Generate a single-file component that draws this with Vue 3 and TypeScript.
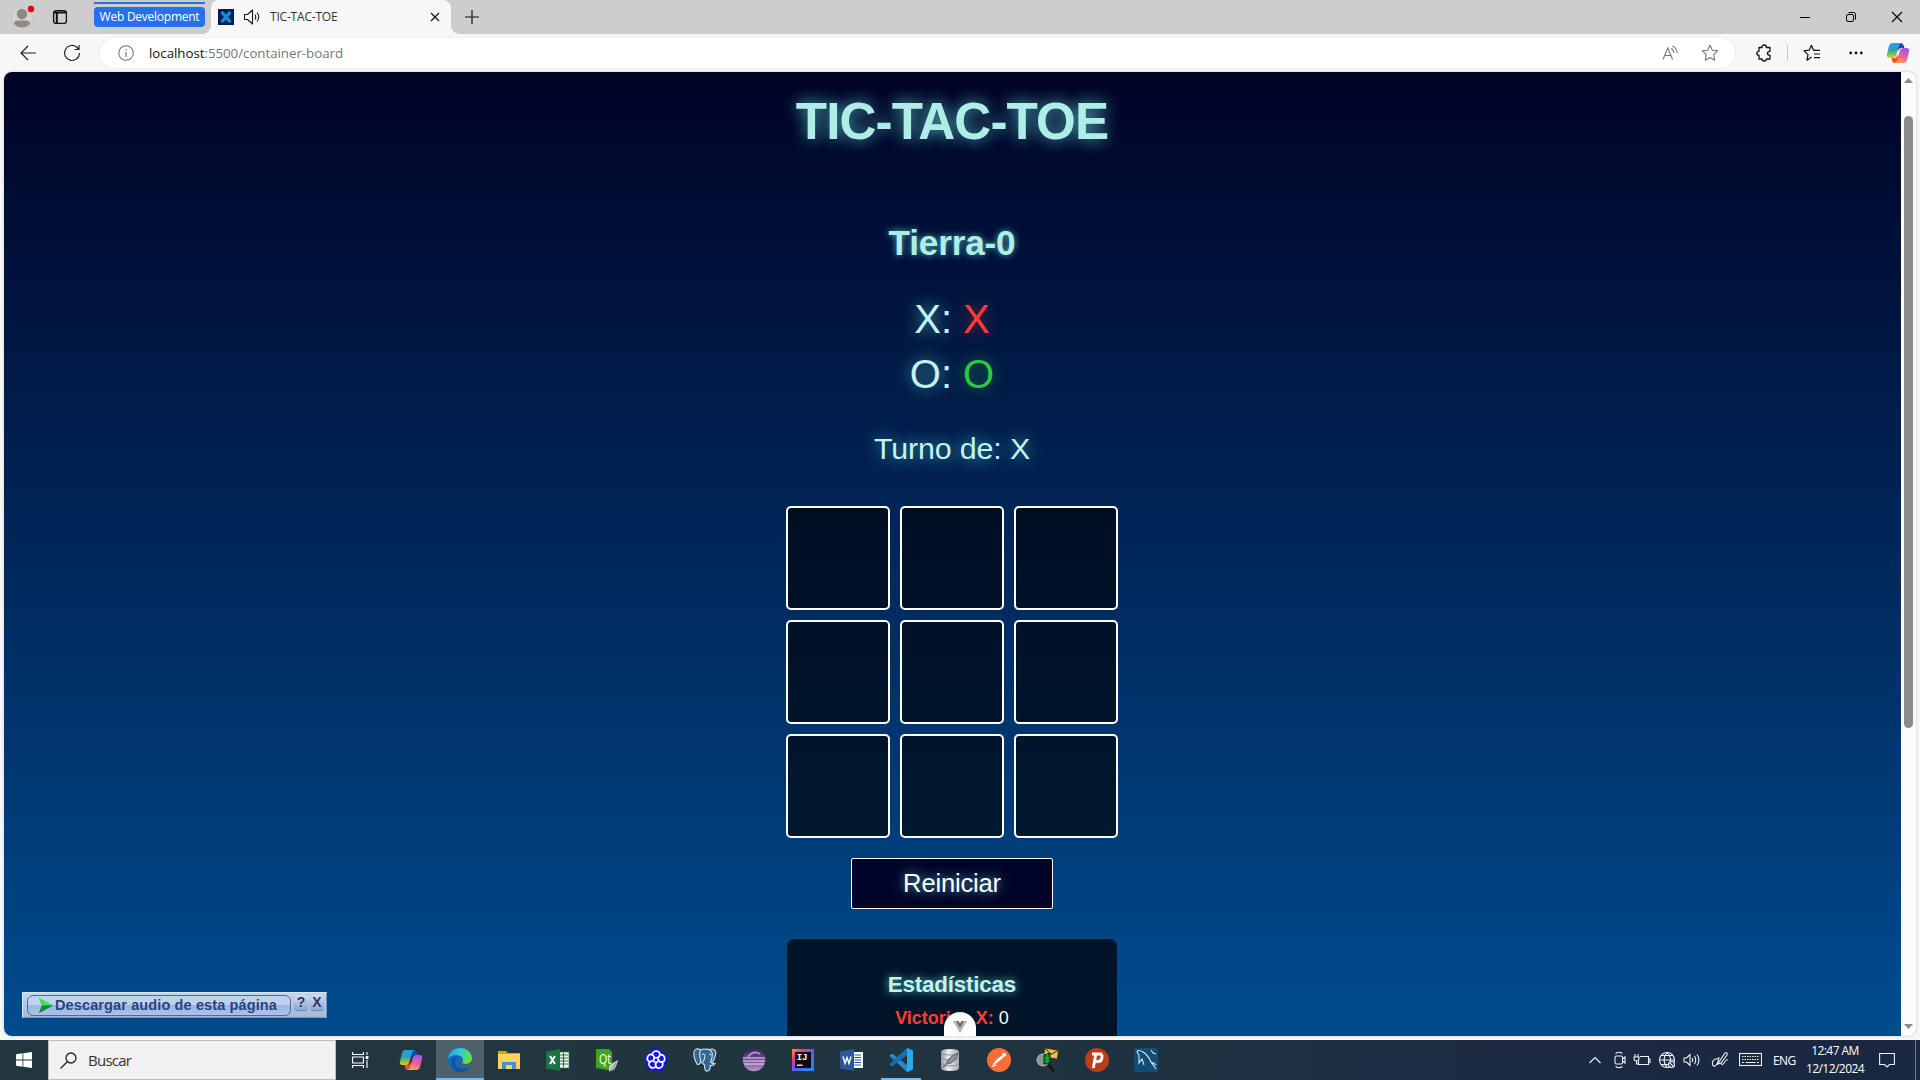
<script setup lang="ts">
import { ref } from 'vue'

const board = ref<string[]>(Array(9).fill(''))
const turn = ref('X')
const winsX = ref(0)

function play(i: number) {
  if (board.value[i]) return
  board.value[i] = turn.value
  turn.value = turn.value === 'X' ? 'O' : 'X'
}
function reset() {
  board.value = Array(9).fill('')
  turn.value = 'X'
}
</script>

<template>
  <div class="screen">
    <header class="tabs">
      <svg class="avatar" width="24" height="24" viewBox="0 0 24 24"><circle cx="11" cy="12.500" r="10.500" fill="#d5d2cf" stroke="#bdbab7" stroke-width=".5" /><circle cx="11" cy="9" r="5.200" fill="#8d8985" /><path d="M3 18.500Q3.500 15.500 7 15.500H15Q18.500 15.500 19 18.500Q16 22.500 11 22.500Q6 22.500 3 18.500Z" fill="#8d8985" /><circle cx="20" cy="4" r="3.200" fill="#e3000b" /></svg>
      <svg class="panes" width="16" height="16" viewBox="0 0 16 16" fill="none" stroke="#111"><rect x="1.600" y="1.600" width="12.800" height="12.800" rx="2.500" stroke-width="1.300" /><path d="M2 3.400H14M4.800 4V14" stroke-width="2" /></svg>
      <div class="group"><span>Web Development</span></div>
      <div class="tab">
        <svg width="16" height="16" viewBox="0 0 16 16"><rect width="16" height="16" fill="#04204f" /><path d="M4.500 4L11.500 12M11.500 4L4.500 12" stroke="#168be8" stroke-width="3.400" stroke-linecap="round" /></svg>
        <svg class="sound" width="18" height="18" viewBox="0 0 18 18" fill="none" stroke="#1b1b1b" stroke-width="1.100"><path d="M1.500 6.500H4.500L9.500 2V16L4.500 11.500H1.500Z" stroke-linejoin="round" /><path d="M12 6.500Q13.500 9 12 11.500M14 4.500Q17.500 9 14 13.500" /></svg>
        <span class="tab-title">TIC-TAC-TOE</span>
        <svg class="close" width="10" height="10" viewBox="0 0 10 10"><path d="M1 1L9 9M9 1L1 9" stroke="#111" stroke-width="1.200" /></svg>
      </div>
      <svg class="plus" width="14" height="14" viewBox="0 0 14 14"><path d="M7 0V14M0 7H14" stroke="#111" stroke-width="1.200" /></svg>
      <div class="window-buttons">
        <svg width="46" height="34" viewBox="0 0 46 34"><path d="M18 17.500H28" stroke="#000" /></svg>
        <svg width="46" height="34" viewBox="0 0 46 34" fill="none" stroke="#000"><rect x="18.500" y="14.500" width="7" height="7" rx="1.500" /><path d="M20.500 12.500H25.500Q27.500 12.500 27.500 14.500V19.500" /></svg>
        <svg width="46" height="34" viewBox="0 0 46 34"><path d="M18 12L28 22M28 12L18 22" stroke="#000" stroke-width="1.100" /></svg>
      </div>
    </header>

    <div class="toolbar">
      <svg class="back" width="16" height="16" viewBox="0 0 16 16" fill="none" stroke="#222" stroke-width="1.200"><path d="M16 8H1M8 1L1 8L8 15" /></svg>
      <svg class="reload" width="18" height="18" viewBox="0 0 18 18" fill="none" stroke="#222" stroke-width="1.200"><path d="M16.500 9A7.500 7.500 0 1 1 13.500 3L16 5.500M16 1V5.500H11.500" /></svg>
      <div class="address">
        <svg width="16" height="16" viewBox="0 0 16 16" fill="none" stroke="#767676"><circle cx="8" cy="8" r="7.300" stroke-width="1.100" /><path d="M8 7V12M8 4.200V5.500" stroke-width="1.200" /></svg>
        <span class="url"><b>localhost</b>:5500/container-board</span>
        <svg class="read" width="16" height="16" viewBox="0 0 16 16" fill="none" stroke="#767676" stroke-width="1.100"><path d="M1 14.500L5.800 3L10.600 14.500M2.800 10.500H8.800M9 3.500Q11.500 4.500 12 8M10.500 1Q14.500 3 15.300 8" /></svg>
        <svg width="18" height="18" viewBox="0 0 18 18" fill="none" stroke="#767676" stroke-width="1.100" stroke-linejoin="round"><path d="M9 1.300L11.300 6.200L16.700 6.900L12.700 10.600L13.700 16.200L9 13.500L4.300 16.200L5.300 10.600L1.300 6.900L6.700 6.200Z" /></svg>
      </div>
      <svg class="ext" width="16" height="18" viewBox="0 0 16 18" fill="none" stroke="#111" stroke-width="1.300" stroke-linejoin="round"><path d="M3 3.500H6Q6 1 8.200 1Q10.400 1 10.400 3.500H14V7.300Q11.500 7.300 11.500 9.300Q11.500 11.300 14 11.300V15H10.400Q10.400 17 8.200 17Q6 17 6 15H3V11.300Q.8 11.300 .8 9.300Q.8 7.300 3 7.300Z" /></svg>
      <i class="sep"></i>
      <svg class="favs" width="18" height="18" viewBox="0 0 18 18" fill="none" stroke="#111" stroke-width="1.200" stroke-linejoin="round"><path d="M8.500 13L4 16.200L5 10.600L1 6.900L6.200 6.200L8.400 1.300L10.500 6.200H12M11 6.300H17M11 10H17M11 13.700H17" /></svg>
      <svg class="dots" width="14" height="4" viewBox="0 0 14 4" fill="#111"><circle cx="1.700" cy="2" r="1.400" /><circle cx="7" cy="2" r="1.400" /><circle cx="12.300" cy="2" r="1.400" /></svg>
      <svg class="copilot" width="24" height="22" viewBox="0 0 24 22"><use href="#copilot" /></svg>
    </div>

    <main class="viewport">
      <section class="page">
        <h1>TIC-TAC-TOE</h1>
        <h2>Tierra-0</h2>
        <p class="score">X: <span class="x">X</span></p>
        <p class="score">O: <span class="o">O</span></p>
        <p class="turn">Turno de: {{ turn }}</p>
        <div class="board">
          <button v-for="(cell, i) in board" :key="i" class="cell" @click="play(i)">{{ cell }}</button>
        </div>
        <button class="reset" @click="reset">Reiniciar</button>
        <div class="stats">
          <h3>Estadísticas</h3>
          <p><b>Victorias X:</b> {{ winsX }}</p>
        </div>
      </section>
      <div class="scrollbar">
        <svg width="9" height="5" viewBox="0 0 9 5"><path d="M0 5L4.500 0L9 5Z" fill="#8b8b8b" /></svg>
        <i class="thumb"></i>
        <svg width="9" height="5" viewBox="0 0 9 5"><path d="M0 0L4.500 5L9 0Z" fill="#8b8b8b" /></svg>
      </div>
      <div class="devtools"><svg width="14" height="12" viewBox="0 0 14 12"><path d="M0 0H3L7 7L11 0H14L7 12Z" fill="#b4b4b4" /><path d="M3 0H5.500L7 2.500L8.500 0H11L7 7Z" fill="#666" /></svg></div>
      <div class="audio">
        <div class="audio-main"><svg width="15" height="15" viewBox="0 0 15 15"><path d="M1 0L15 7.500L1 15L4 7.500Z" fill="#20b24a" /><path d="M1 0L15 7.500H4Z" fill="#45e05c" /><path d="M1 15L15 7.500H4Z" fill="#138348" /></svg><span>Descargar audio de esta página</span></div>
        <span class="audio-small">?</span><span class="audio-small">X</span>
      </div>
    </main>

    <footer class="taskbar">
      <div class="start"><svg width="16" height="16" viewBox="0 0 16 16" fill="#fff"><path d="M0 2.200L6.500 1.300V7.600H0ZM7.300 1.200L16 0V7.600H7.300ZM0 8.400H6.500V14.700L0 13.800ZM7.300 8.400H16V16L7.300 14.800Z" /></svg></div>
      <div class="search"><svg width="17" height="17" viewBox="0 0 17 17" fill="none" stroke="#222" stroke-width="1.300"><circle cx="11" cy="6" r="5" /><path d="M7.500 9.500L.5 16.500" /></svg><span>Buscar</span></div>
      <div class="apps">
        <div class="app view"><svg width="17" height="16" viewBox="0 0 17 16" fill="none" stroke="#fff" stroke-width="1.100"><path d="M.6 0V2.500H11.400V0M.6 16V13.500H11.400V16M.6 5H11.400V11H.6ZM15 0V3M15 8V16" /><rect x="13.600" y="4" width="2.800" height="3" fill="#fff" stroke="none" /></svg></div>
        <div class="app"><svg width="24" height="22" viewBox="0 0 24 22">
          <defs>
            <linearGradient id="ca" x1="0" y1="0" x2="0" y2="1"><stop offset="0" stop-color="#19a5ef" /><stop offset=".45" stop-color="#2f9bb5" /><stop offset=".75" stop-color="#7cc24c" /><stop offset="1" stop-color="#f6c927" /></linearGradient>
            <linearGradient id="cb" x1=".6" y1="0" x2=".3" y2="1"><stop offset="0" stop-color="#a05be8" /><stop offset=".5" stop-color="#ee5a9b" /><stop offset="1" stop-color="#ffa24a" /></linearGradient>
            <g id="copilot"><path d="M12 1H15Q17 1 17.700 3.500L18.500 6H15.500Q13 6 12 9Z" fill="#1748b5" /><path d="M12 21H8.500Q6.500 21 6 18.500L5.500 16H8.500Q11 16 12 12Z" fill="#f0532d" /><path d="M6.500 1H15.500Q13.800 1 13 3.800L10.200 13.500Q9.400 16 7 16H3.500Q0 16 1 12L3 4Q4 1 6.500 1Z" fill="url(#ca)" /><path d="M17 6H20.500Q24 6 23 10L21 18Q20 21 17.500 21H8.500Q10.400 21 11.200 18.200L13.800 8.700Q14.500 6 17 6Z" fill="url(#cb)" /></g>
            <linearGradient id="edge" x1="0" y1="0" x2="1" y2=".3"><stop stop-color="#219be6" /><stop offset=".5" stop-color="#32c6dc" /><stop offset="1" stop-color="#5fe24f" /></linearGradient>
            <linearGradient id="ij" x1="0" y1="0" x2="1" y2="1"><stop stop-color="#ff9a2e" /><stop offset=".25" stop-color="#ee3b79" /><stop offset=".5" stop-color="#5d5af1" /><stop offset="1" stop-color="#1095ff" /></linearGradient>
            <linearGradient id="ecl" x1="0" y1="0" x2="0" y2="1"><stop stop-color="#3b235f" /><stop offset=".45" stop-color="#6d4790" /><stop offset="1" stop-color="#b894cb" /></linearGradient>
            <linearGradient id="db"><stop stop-color="#9297a1" /><stop offset=".4" stop-color="#eceef3" /><stop offset="1" stop-color="#a5a9b7" /></linearGradient>
          </defs><use href="#copilot" /></svg></div>
        <div class="app active"><svg width="24" height="24" viewBox="0 0 24 24"><circle cx="12" cy="12" r="12" fill="#1369bd" /><path d="M0 11C1 3.500 6 0 12 0C19 0 24 5 24 10.500C24 14 21 16 17.500 16C15 16 13.500 15.200 14.300 14C17 10 12 6.500 7.500 7C3.500 7.400 1 9 0 11Z" fill="url(#edge)" /><path d="M9.500 8.500C5 12 7 20 14 21C18 21.500 21 20 22.500 18C20 23 15 24.500 11 24C5 23 2.500 17 4 12.500C5 9.500 7.500 8.200 9.500 8.500Z" fill="#0d579f" /><path d="M14.300 14C13.500 15.200 15 16 17.500 16C20 16 22 15 23 13.500C23.500 16 23 17.500 22 18.500C18 20.500 12 19.500 11.500 15C11.300 12.500 13 11 14.800 11.500Z" fill="#49606a" /></svg></div>
        <div class="app"><svg width="22" height="18" viewBox="0 0 22 18"><path d="M0 0H8L10 2H22V17H0Z" fill="#e59c15" /><rect y="3" width="22" height="15" fill="#ffd35b" /><path d="M4 18V11H18V18H14V14H8V18Z" fill="#3e91dc" /></svg></div>
        <div class="app"><svg width="24" height="22" viewBox="0 0 24 22"><rect x="11" y="3" width="12" height="16" fill="#fff" stroke="#1d7343" stroke-width=".8" /><path d="M14 6H22M14 9H22M14 12H22M14 15H22M17.500 4V18" stroke="#1d7343" stroke-width="1.200" /><path d="M0 2.500L14 0V22L0 19.500Z" fill="#1e7145" /><path d="M4 7L9 15M9 7L4 15" stroke="#fff" stroke-width="2" /></svg></div>
        <div class="app"><svg width="24" height="24" viewBox="0 0 24 24"><path d="M1 1H14L17 4V18L13 22L1 20Z" fill="#41a51c" /><text x="4" y="15.500" font-family="Open Sans, sans-serif" font-size="14" textLength="12" lengthAdjust="spacingAndGlyphs" fill="#fff">Qt</text><path d="M23 12Q21 22 16 23H14Q13 18 16 16Q20 13.500 23 12Z" fill="#c8cbc8" /><path d="M14 24Q18 21 21 15" stroke="#777" fill="none" /></svg></div>
        <div class="app"><svg width="24" height="24" viewBox="0 0 24 24"><path d="M12 0Q17 0 18 4Q23 5 23.500 10Q24 14 21 16Q21 22 16 23Q13 24 11 22Q6 24 3.500 20Q2 18 3 15Q-1 12 1 8Q3 4 7 4.500Q8 0 12 0Z" fill="#1712ef" /><g fill="none" stroke="#fff" stroke-width="1.700"><path v-for="r in [0, 72, 144, 216, 288]" :key="r" :transform="`rotate(${r} 12 12)`" d="M8 7.500Q8.500 3 12.500 3Q17 4 15.500 8Q14 10.500 11 9.500" /></g></svg></div>
        <div class="app"><svg width="24" height="24" viewBox="0 0 24 24" stroke="#d6e1e9" stroke-width="1.100" fill="#336791"><path d="M8 2Q2-1 1 4Q0 9 4 16Q5.500 17.500 7 15L8.500 13.500M15 2Q22-1 23 5Q22 11 19 15L17 14" /><path d="M7 3Q9 .5 12 1.200Q17 .5 19 4.500Q20 9 17.500 14Q20 16 22 15.500Q21 18 17.200 17.500Q17.500 23 14 23.300Q11.500 23.500 11.500 17L8 14Q6 7 7 3Z" /><path d="M9 6.500Q11.500 5 12 8Q11.500 12 10 14M16 6Q18 6 18 7.500" fill="none" /></svg></div>
        <div class="app"><svg width="24" height="24" viewBox="0 0 24 24"><circle cx="12" cy="12" r="11.300" fill="url(#ecl)" /><path d="M1 10H23M1 13H23M2 16H22" stroke="#eadcf0" stroke-width="1.100" /><path d="M6 9Q11 2 18 6" stroke="#b391c9" stroke-width="2" fill="none" /></svg></div>
        <div class="app"><svg width="22" height="22" viewBox="0 0 22 22"><rect width="22" height="22" fill="url(#ij)" /><rect x="3" y="3" width="16" height="16" fill="#13060f" /><text x="4.700" y="11" font-family="Liberation Mono, monospace" font-weight="700" font-size="9" fill="#fff">IJ</text><path d="M5 16.200H10.500" stroke="#fff" stroke-width="1.300" /></svg></div>
        <div class="app"><svg width="24" height="22" viewBox="0 0 24 22"><rect x="11" y="3" width="12" height="16" fill="#fff" /><path d="M14.500 6H21M14.500 8.500H21M14.500 11H21M14.500 13.500H21M14.500 16H21" stroke="#2b579a" /><path d="M0 2.500L14 0V22L0 19.500Z" fill="#2b579a" /><path d="M3 7.500L5 14.500L7 8.500L9 14.500L11 7.500" fill="none" stroke="#fff" stroke-width="1.400" /></svg></div>
        <div class="app running"><svg width="24" height="24" viewBox="0 0 24 24"><path d="M18 0L24 2.500V21.500L18 24L1 8.500Q.3 7.500 1 7L2.500 5.800Q3.200 5.500 4 6L18 17Z" fill="#2489ca" /><path d="M18 24L24 21.500V2.500L18 0L1 15.500Q.3 16.500 1 17L2.500 18.200Q3.200 18.500 4 18L18 7Z" fill="#1070b3" /><path d="M18 0L24 2.500V21.500L18 24Z" fill="#29a8ec" /></svg></div>
        <div class="app"><svg width="18" height="22" viewBox="0 0 18 22"><path d="M0 3Q0 0 9 0T18 3V19Q18 22 9 22T0 19Z" fill="url(#db)" /><path d="M0 3.500Q1 6 9 6T18 3.500M0 9Q2 11 9 11T18 9M0 15Q2 17 9 17T18 15" fill="none" stroke="#8a8f9b" /><path d="M2 19Q5 15 7 11Q11 6 17 4Q15 13 7 15" fill="#8d929c" stroke="#596069" /></svg></div>
        <div class="app"><svg width="24" height="24" viewBox="0 0 24 24"><circle cx="12" cy="12" r="12" fill="#ff6c37" /><path d="M6 17L10 11.500L15 8L16 9.500L11 13.500ZM5 18.500L9.500 17" fill="#fff" stroke="#fff" /><circle cx="17" cy="6.700" r="2" fill="#fff" /></svg></div>
        <div class="app"><svg width="24" height="24" viewBox="0 0 24 24"><g transform="rotate(10 15 6)"><path d="M8 1H22V10H8Z" fill="#ecc351" stroke="#493617" /><path d="M8 1L15 6.500L22 1" fill="none" stroke="#493617" /></g><circle cx="7" cy="12" r="6" fill="#8d9692" stroke="#b8bcbb" /><path d="M8 7L14 5V15L8 16Z" fill="#107a19" stroke="#022" /><path d="M8 10H14M8 13H14M11 6V16" stroke="#0bdc31" stroke-width=".7" /><path d="M13 17L18 23.500" stroke="#111" stroke-width="2.500" /></svg></div>
        <div class="app"><svg width="24" height="24" viewBox="0 0 24 24"><circle cx="12" cy="12" r="12" fill="#bd3c1b" /><path d="M7 6H14.500Q17.500 6 17 9.500Q16.500 13.500 13 13.500H9.500M10.800 6L8.300 20" fill="none" stroke="#fff" stroke-width="2.900" /></svg></div>
        <div class="app"><svg width="24" height="24" viewBox="0 0 24 24"><rect width="24" height="24" rx="2.500" fill="#124d75" /><path d="M3 3Q5 1.500 9 4Q14 7 17 14L22 21M3 3Q3.500 5 5 7L5 15L8 11L10 17M17 14Q20 15 22 17M17 2L19 5L22 6" fill="none" stroke="#d4e4ed" stroke-width="1.100" /></svg></div>
      </div>
      <div class="tray">
        <svg width="14" height="20" viewBox="0 0 14 20"><path d="M1.500 13L7 7.500L12.500 13" /></svg>
        <svg class="t-cam" width="14" height="20" viewBox="0 0 14 20"><rect x="2" y="6" width="7.500" height="8" rx="1.500" /><path d="M9.500 9L12 7V13L9.500 11M2.500 3.500Q6 1 9.500 3.500M2.500 16.500Q6 19 9.500 16.500" /></svg>
        <svg class="t-bat" width="18" height="20" viewBox="0 0 18 20"><path d="M7 6.500H15.500V14.500H5.500V11M16 9H17V12.500H16M2 4V7M5 4V7M1 7H6V9Q5.500 11 3.500 11Q1.500 11 1 9ZM3.500 11V14H6" /></svg>
        <svg class="t-globe" width="18" height="20" viewBox="0 0 18 20"><circle cx="9" cy="10" r="7.500" /><path d="M1.500 10H16M9 2.500Q3 10 9 17.500M9 2.500Q14 8 12 12M3 5.500H15M3 14.500H10" /><circle cx="13.500" cy="14.500" r="3" fill="#1b2842" /><path d="M11.500 12.500L15.500 16.500" /></svg>
        <svg class="t-vol" width="18" height="20" viewBox="0 0 18 20"><path d="M1 8H3.500L7 4.500V15.500L3.500 12H1ZM9 8Q10.500 10 9 12M11.500 6Q14 10 11.500 14M14 4.500Q18 10 14 15.500" /></svg>
        <svg class="t-pen" width="18" height="20" viewBox="0 0 18 20"><path d="M8 12L14 3Q17 2 16 5L10 13L7 14ZM8 9Q3 8 1.500 12Q1 17 4 16Q7 14 8 7M10 13Q11 16 13 13Q15 9 17 10" /></svg>
        <svg class="t-key" width="23" height="20" viewBox="0 0 23 20"><rect x=".5" y="3.500" width="22" height="12" /><path d="M3 6.500H20M3 9.500H20" stroke-dasharray="1.500 1" /><path d="M3 12.500H5M6.500 12.500H16.500M18 12.500H20" /></svg>
        <span class="lang">ENG</span>
        <div class="clock"><span>12:47 AM</span><span class="date">12/12/2024</span></div>
        <svg class="t-note" width="16" height="20" viewBox="0 0 16 20"><path d="M.6 3.500H15.400V14.500H10.500L8 17L5.500 14.500H.6Z" /></svg>
        <i class="desk"></i>
      </div>
    </footer>
  </div>
</template>

<style>
body { margin: 0; overflow: hidden; background: #f7f7f7; }
</style>

<style scoped>
* { box-sizing: border-box; }
svg { display: block; flex: none; }
h1, h2, h3, p { margin: 0; white-space: nowrap; }
.screen { width: 1920px; height: 1080px; display: flex; flex-direction: column; font-family: "Open Sans", "Noto Sans", sans-serif; background: #f7f7f7; overflow: hidden; }

.tabs { height: 34px; flex: none; display: flex; align-items: flex-start; background: #cdcdcd; }
.avatar { margin: 5px 0 0 11px; }
.panes { margin: 9px 0 0 17px; }
.group { width: 111px; height: 27px; margin: 2px 0 0 26px; border-top: 2px solid #2a6fea; padding-top: 3px; }
.group span { display: block; height: 20px; border-radius: 4px; background: #2a6fea; color: #fff; font-size: 12px; line-height: 20px; text-align: center; white-space: nowrap; letter-spacing: -.25px; }
.tab { width: 240px; height: 34px; margin-left: 6px; padding: 0 11px 1px 7px; background: #f7f7f7; border-radius: 8px 8px 0 0; display: flex; align-items: center; position: relative; }
.tab::before, .tab::after { content: ""; position: absolute; bottom: 0; width: 8px; height: 8px; }
.tab::before { left: -8px; background: radial-gradient(circle at 0 0, #cdcdcd 7.5px, #f7f7f7 8px); }
.tab::after { right: -8px; background: radial-gradient(circle at 100% 0, #cdcdcd 7.5px, #f7f7f7 8px); }
.sound { margin-left: 9px; }
.tab-title { margin-left: 9px; font-size: 12px; color: #333; letter-spacing: -.2px; flex: 1; }
.close { margin-top: 1px; }
.plus { margin: 10px 0 0 14px; }
.window-buttons { margin-left: auto; display: flex; }

.toolbar { height: 38px; flex: none; display: flex; align-items: center; padding: 0 11px 0 20px; }
.reload { margin-left: 27px; }
.address { width: 1635px; height: 30px; margin-left: 19px; padding: 0 16px 0 18px; border-radius: 15px; background: #fff; box-shadow: 0 0 3px rgba(0,0,0,.08); display: flex; align-items: center; }
.url { margin-left: 15px; flex: 1; font-size: 13.300px; color: #767676; letter-spacing: -.03px; }
.url b { font-weight: 400; color: #111; }
.read { margin-right: 23px; }
.ext { margin-left: 21px; }
.sep { width: 1px; height: 16px; background: #c8c8c8; margin-left: 15px; }
.favs { margin-left: 15px; }
.dots { margin-left: 28px; }
.copilot { margin-left: auto; margin-right: -1px; }

.viewport { position: relative; width: 1912px; height: 964px; margin-left: 4px; flex: none; display: flex; border-radius: 8px; overflow: hidden; box-shadow: 0 0 3px rgba(0,0,0,.2); background: #fcfcfc; }
.page { width: 1897px; height: 964px; padding-right: 1px; overflow: hidden; background: linear-gradient(#000326, #004c8f); display: flex; flex-direction: column; align-items: center; font-family: "Liberation Sans", Arial, sans-serif; color: #c3f3ef; }
.page h1 { height: 60px; line-height: 60px; margin-top: 20px; font-size: 51.200px; letter-spacing: -.9px; color: #afeee8; text-shadow: 0 0 16px rgba(95,210,205,.9); }
.page h2 { height: 40px; line-height: 40px; margin-top: 71px; font-size: 35.200px; letter-spacing: -.2px; color: #afeee8; text-shadow: 0 0 7px rgba(95,220,215,.8); }
.score { height: 55px; line-height: 55px; font-size: 40px; text-shadow: 0 0 16px rgba(95,210,205,.85); }
h2 + .score { margin-top: 29px; }
.x { color: #ff3c36; text-shadow: 0 0 14px rgba(255,60,54,.5); }
.o { color: #2acb3c; text-shadow: 0 0 14px rgba(42,203,60,.6); }
.turn { height: 40px; line-height: 40px; margin-top: 26px; font-size: 30.400px; letter-spacing: -.15px; text-shadow: 0 0 16px rgba(95,210,205,.85); }
.board { margin-top: 38px; display: grid; grid-template-columns: repeat(3, 104px); grid-auto-rows: 104px; gap: 10px; }
.cell { border: 2px solid #fff; border-radius: 5px; background: rgba(0,0,0,.6); color: #fff; font-size: 48px; padding: 0; }
.reset { width: 202px; height: 51px; margin-top: 20px; flex: none; border: 1px solid #fff; border-radius: 2px; background: #000428; color: #fff; font: 25.600px "Liberation Sans", Arial, sans-serif; letter-spacing: -.2px; text-shadow: 0 0 12px rgba(95,210,205,.9); }
.stats { width: 330px; height: 200px; margin-top: 30px; flex: none; border-radius: 8px; background: #001428; padding-top: 33px; text-align: center; }
.stats h3 { font-size: 22.400px; line-height: 26px; letter-spacing: -.2px; text-shadow: 0 0 10px rgba(95,210,205,.95); }
.stats p { margin-top: 7px; font-size: 18px; line-height: 26px; color: #fff; }
.stats b { color: #ff3c36; }
.scrollbar { width: 15px; display: flex; flex-direction: column; align-items: center; padding: 6px 0 7px; justify-content: space-between; }
.thumb { width: 9px; height: 612px; border-radius: 5px; background: #8b8b8b; margin: 33px 0 auto; }
.devtools { position: absolute; left: 940px; bottom: 0; width: 32px; height: 24px; border-radius: 16px 16px 0 0; background: #fff; display: flex; justify-content: center; padding-top: 9px; }
.audio { position: absolute; left: 18px; top: 920px; width: 305px; height: 26px; background: linear-gradient(#c5d5ee, #a6b8d8); border: 1px solid #dbe7f6; border-right-color: #8494b4; border-bottom-color: #8494b4; display: flex; padding: 2px 1px 2px 4px; font-family: "Liberation Sans", sans-serif; color: #2a437e; font-weight: 700; }
.audio-main { width: 264px; height: 21px; flex: none; border: 1px solid #4b68a9; border-radius: 6px; background: linear-gradient(#bfd2f0 45%, #9ab7e4 50%, #a9c3ea); display: flex; align-items: center; padding-left: 10px; margin-right: 2px; }
.audio-main span { margin-left: 2px; font-size: 14.500px; letter-spacing: .12px; line-height: 16px; padding-bottom: 2px; white-space: nowrap; }
.audio-small { width: 14px; height: 15px; flex: none; margin: 0 1px 0 1px; border-radius: 4px; background: linear-gradient(#d0dcf0, #8ca7d2); box-shadow: 0 1px 1px #6d83ac; font-size: 14px; line-height: 15px; text-align: center; color: #2b3c63; }

.taskbar { margin-top: 4px; height: 40px; flex: none; display: flex; background: linear-gradient(90deg, #22363f 0%, #20363f 40%, #1e3141 62%, #1b2942 82%, #1a2742); color: #fff; }
.start { width: 48px; display: grid; place-items: center; }
.search { width: 288px; background: #f1f1f1; border: 1px solid #bdbdbd; display: flex; align-items: center; padding-left: 11px; color: #333; font-size: 15px; }
.search span { margin-left: 11px; letter-spacing: -.75px; }
.apps { display: flex; gap: 1px; padding-left: 2px; }
.app { width: 48px; height: 40px; display: grid; place-items: center; }
.view { padding-right: 4px; }
.active { background: #4e6069; border-bottom: 2px solid #76b9ed; padding-top: 2px; }
.running { position: relative; }
.running::after { content: ""; position: absolute; left: 4px; bottom: 0; width: 40px; height: 2px; background: #76b9ed; }
.tray { margin-left: auto; display: flex; align-items: center; }
.tray svg { fill: none; stroke: #eef1f5; stroke-width: 1.1; }
.t-cam { margin-left: 11px; }
.t-bat { margin-left: 6px; }
.t-globe { margin-left: 7px; }
.t-vol { margin-left: 7px; }
.t-pen { margin-left: 10px; }
.t-key { margin-left: 10px; }
.lang { margin-left: 11px; width: 24px; font-size: 12px; letter-spacing: -.6px; }
.clock { margin-left: 4px; width: 68px; display: flex; flex-direction: column; align-items: center; font-size: 12px; line-height: 18px; letter-spacing: -.55px; white-space: nowrap; }
.t-note { margin-left: 10px; }
.desk { width: 1px; height: 40px; background: #737c8d; margin: 0 4px 0 20px; }
</style>
